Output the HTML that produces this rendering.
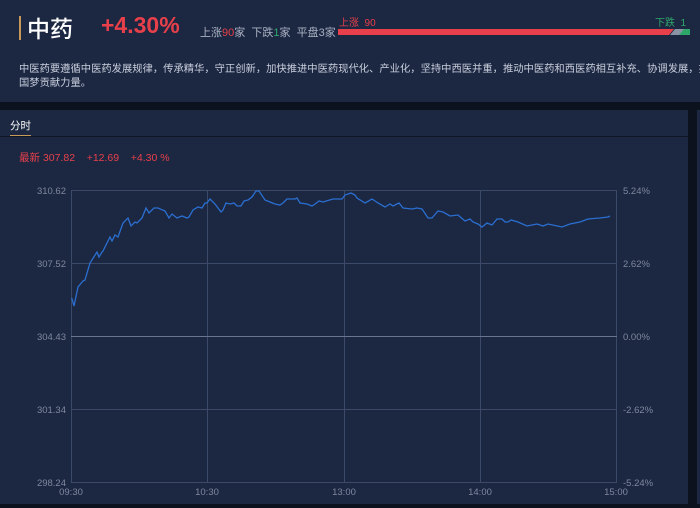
<!DOCTYPE html>
<html><head><meta charset="utf-8"><style>
*{margin:0;padding:0;box-sizing:border-box}
body{width:700px;height:508px;background:#0c121e;position:relative;overflow:hidden;font-family:"Liberation Sans","Noto Sans CJK SC",sans-serif}
.top{position:absolute;left:0;top:0;width:700px;height:102px;background:#1c2742;overflow:hidden}
.bot{position:absolute;left:0;top:110px;width:688px;height:394px;background:#1c2742}
.right{position:absolute;left:697px;top:110px;width:3px;height:394px;background:#1c2742}
.t{position:absolute;white-space:nowrap}
</style></head><body>
<div class="top">
 <div class="t" style="left:19px;top:16px;width:2px;height:24px;background:#c89a5a"></div>
 <div class="t" style="left:27px;top:10px;font-size:23px;color:#fff;font-weight:500">中药</div>
 <div class="t" style="left:101px;top:12px;font-size:23px;color:#e8404a;font-weight:bold">+4.30%</div>
 <div class="t" style="left:200px;top:24px;font-size:11px;color:#aab2c2">上涨<span style="color:#e8404a">90</span>家 &nbsp;下跌<span style="color:#2ea86a">1</span>家 &nbsp;平盘3家</div>
 <div class="t" style="left:339px;top:14px;font-size:10px;color:#e8404a">上涨 &nbsp;90</div>
 <div class="t" style="left:655px;top:14px;font-size:10px;color:#2ea86a">下跌 &nbsp;1</div>
 <svg class="t" style="left:338px;top:29px" width="352" height="7"><polygon points="0,0 336,0 331,6 0,6" fill="#e8404a"/><polygon points="337,0 350,0 345,6 332,6" fill="#8a93a6"/><polygon points="346,0 352,0 352,6 341,6" fill="#2ea86a"/></svg>
 <div class="t" style="left:19px;top:63px;font-size:10.3px;line-height:14px;color:#c8cfdc">中医药要遵循中医药发展规律，传承精华，守正创新，加快推进中医药现代化、产业化，坚持中西医并重，推动中医药和西医药相互补充、协调发展，推动中医药事业和产业高质量发展</div>
 <div class="t" style="left:19px;top:77px;font-size:10.3px;line-height:14px;color:#c8cfdc">国梦贡献力量。</div>
</div>
<div class="bot">
 <div class="t" style="left:10px;top:8px;font-size:10.5px;color:#fff">分时</div>
 <div class="t" style="left:10px;top:25px;width:21px;height:2px;background:#c89a5a"></div>
 <div class="t" style="left:0;top:26px;width:688px;height:1px;background:#0e1524"></div>
 <div class="t" style="left:19px;top:40px;font-size:10.5px;color:#e8404a">最新 307.82 &nbsp;&nbsp; +12.69 &nbsp;&nbsp; +4.30 %</div>
</div>
<div class="right"></div>
<svg class="t" style="left:0;top:0" width="700" height="508">
 <g stroke="#3a4a68" stroke-width="1" fill="none">
  <line x1="71" y1="190.5" x2="617" y2="190.5"/><line x1="71" y1="263.5" x2="617" y2="263.5"/>
  <line x1="71" y1="409.5" x2="617" y2="409.5"/><line x1="71" y1="482.5" x2="617" y2="482.5"/>
  <line x1="71.5" y1="190" x2="71.5" y2="482"/><line x1="207.5" y1="190" x2="207.5" y2="482"/>
  <line x1="344.5" y1="190" x2="344.5" y2="482"/><line x1="480.5" y1="190" x2="480.5" y2="482"/>
  <line x1="616.5" y1="190" x2="616.5" y2="482"/>
 </g>
 <line x1="71" y1="336.5" x2="617" y2="336.5" stroke="#6a7590"/>
 <polyline fill="none" stroke="#2a6fd0" stroke-width="1.3" points="71.7,298 74,306 78,287 83,281 85,280 90,263 97,252 99,257 102,252 103,251 110,237 112,241 115,235 118,237 123,223 128,218 131,226 135,222 137,223 142,218 146,208 149,213 154,208 158,208 165,211 169,218 172,214 177,218 182,216 187,218 189,217 193,210 198,207 202,208 205,203 207,203 210,199 215,204 221,212 223,210 226,203 230,204 234,203 237,206 241,206 244,201 248,200 252,197 256,191 259,191 265,200 270,202 275,204 280,205 283,203 287,199 295,199 297,198 300,203 307,204 312,206 315,204 319,201 323,202 333,199 342,199 345,195 351,193 355,195 357,198 365,203 372,199 378,203 385,207 390,204 393,206 399,203 403,208 412,209 417,208 422,209 428,218 432,218 438,211 443,212 450,216 458,215 465,221 470,219 473,222 478,224 482,227 487,223 492,225 497,219 502,219 505,222 508,222 511,220 518,222 527,226 537,224 543,226 548,224 562,227 570,224 580,222 588,219 600,218 608,217 610,216"/>
 <g font-family="Liberation Sans,sans-serif" font-size="9.5" fill="#7f889c">
  <text x="66" y="194" text-anchor="end">310.62</text><text x="66" y="267" text-anchor="end">307.52</text>
  <text x="66" y="340" text-anchor="end">304.43</text><text x="66" y="413" text-anchor="end">301.34</text>
  <text x="66" y="486" text-anchor="end">298.24</text>
  <text x="623" y="194">5.24%</text><text x="623" y="267">2.62%</text><text x="623" y="340">0.00%</text>
  <text x="623" y="413">-2.62%</text><text x="623" y="486">-5.24%</text>
  <text x="71" y="495" text-anchor="middle">09:30</text><text x="207" y="495" text-anchor="middle">10:30</text>
  <text x="344" y="495" text-anchor="middle">13:00</text><text x="480" y="495" text-anchor="middle">14:00</text>
  <text x="616" y="495" text-anchor="middle">15:00</text>
 </g>
</svg>
</body></html>
